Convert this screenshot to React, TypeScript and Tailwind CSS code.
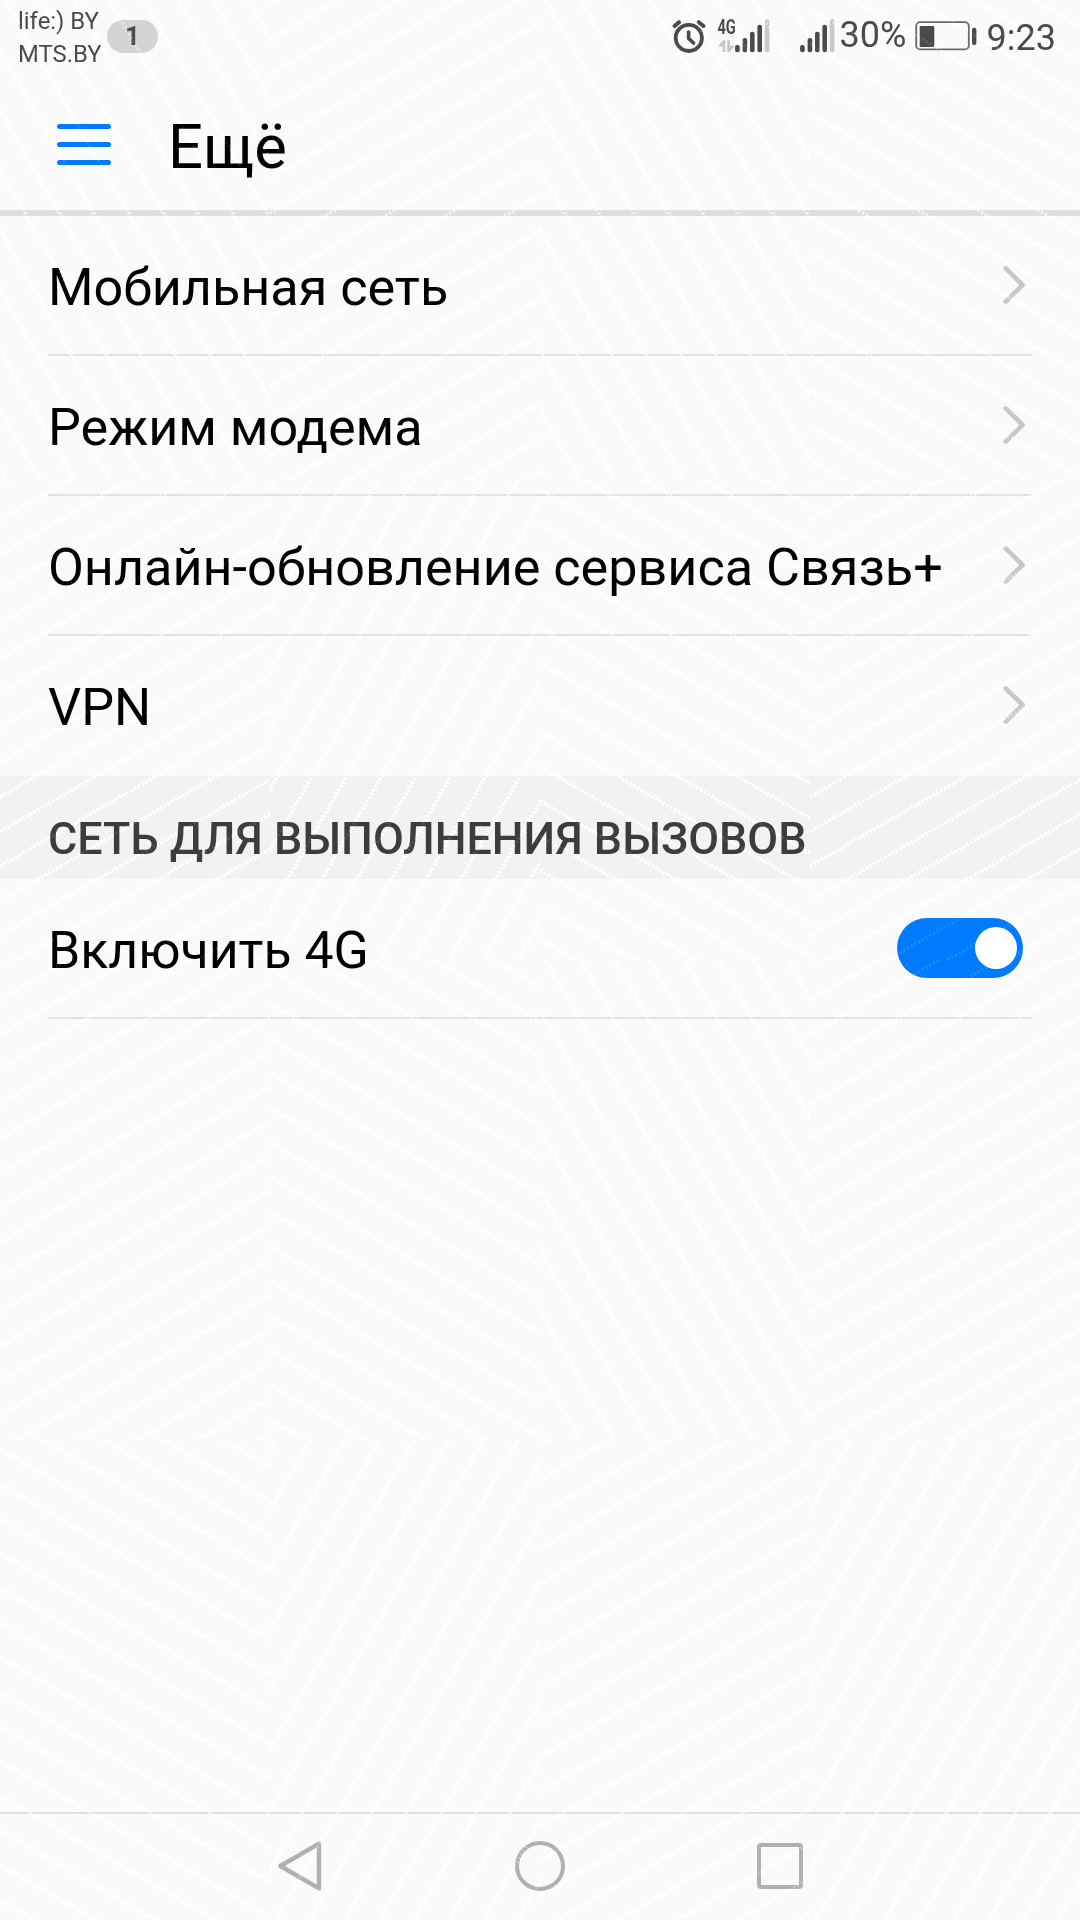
import React from 'react';

type Direction = 'shallowDown' | 'shallowUp' | 'steepDown' | 'steepUp';

const TILE_W = 270;
const TILE_H = 480;
const STEP = 34.641;
const TAN30 = 0.57735;

// Direction of the dotted hatching in every wallpaper tile, row by row
const TILES: Direction[][] = [
  ['steepDown', 'shallowUp', 'steepDown', 'shallowDown'],
  ['shallowUp', 'steepUp', 'shallowDown', 'shallowUp'],
  ['shallowUp', 'shallowDown', 'steepDown', 'shallowUp'],
  ['shallowDown', 'steepUp', 'shallowUp', 'steepUp'],
];

const getTilePath = (direction: Direction): string => {
  const parts: string[] = [];
  for (let i = -10; i < 26; i++) {
    if (direction === 'shallowDown') {
      const y = 9.3 + i * STEP;
      parts.push(`M0 ${y}L${TILE_W} ${y + TILE_W * TAN30}`);
    } else if (direction === 'shallowUp') {
      const y = 5.2 + i * STEP;
      parts.push(`M0 ${y}L${TILE_W} ${y - TILE_W * TAN30}`);
    } else if (direction === 'steepDown') {
      const x = 5.5 + i * STEP;
      parts.push(`M${x} 0L${x + TILE_H * TAN30} ${TILE_H}`);
    } else {
      const x = 5.5 + i * STEP;
      parts.push(`M${x} 0L${x - TILE_H * TAN30} ${TILE_H}`);
    }
  }
  return parts.join('');
};

const Texture: React.FC = () => (
  <svg
    className="absolute inset-0 pointer-events-none mix-blend-plus-lighter"
    width="1080"
    height="1920"
    aria-hidden="true"
  >
    {TILES.map((row, r) =>
      row.map((direction, c) => (
        <svg key={`${r}-${c}`} x={c * TILE_W} y={r * TILE_H} width={TILE_W} height={TILE_H} overflow="hidden">
          <path d={getTilePath(direction)} fill="none" stroke="#141414" strokeWidth="3.5" strokeDasharray="2.3 2" />
        </svg>
      ))
    )}
  </svg>
);

const AlarmIcon: React.FC = () => (
  <svg width="34" height="36" viewBox="0 0 34 36" fill="none" stroke="#4a4a4a" strokeLinecap="round">
    <circle cx="16.8" cy="19.9" r="13.1" strokeWidth="3.8" />
    <path d="M16.6 14v6.4l5 4.6" strokeWidth="3.6" strokeLinejoin="round" />
    <path d="M2.6 8L7 4.2M26.8 4.2l4.6 3.8" strokeWidth="4" />
  </svg>
);

const BARS = [
  { x: 2.3, top: 45 },
  { x: 9.8, top: 38 },
  { x: 17.2, top: 31.7 },
  { x: 24.6, top: 24.7 },
  { x: 32, top: 19 },
];

const SignalBars: React.FC = () => (
  <svg width="35" height="72" viewBox="0 0 35 72">
    {BARS.map((bar, i) => (
      <rect
        key={bar.x}
        x={bar.x - 2.2}
        y={bar.top}
        width="4.6"
        height={52.3 - bar.top}
        rx="2.1"
        fill={i === 4 ? '#c8c8c8' : '#4a4a4a'}
      />
    ))}
  </svg>
);

const BatteryIcon: React.FC = () => (
  <svg width="62" height="32" viewBox="0 0 62 32">
    <rect x="1.2" y="2.2" width="52.6" height="27.2" rx="4" fill="none" stroke="#6a6a6a" strokeWidth="1.8" />
    <rect x="4.7" y="6" width="14.6" height="21" rx="1" fill="#4a4a4a" />
    <rect x="57" y="7.7" width="4.4" height="17.4" rx="2" fill="#4a4a4a" />
  </svg>
);

const ChevronIcon: React.FC = () => (
  <svg width="26" height="42" viewBox="0 0 26 42" fill="none">
    <path
      d="M4.7 4.4L21.6 21L4.7 37.6"
      stroke="#c8c8c8"
      strokeWidth="4.6"
      strokeLinecap="round"
      strokeLinejoin="round"
    />
  </svg>
);

const StatusIcons: React.FC = () => (
  <div className="flex items-start ml-[514px] whitespace-nowrap">
    <div className="mt-[18px]"><AlarmIcon /></div>
    <svg className="ml-[11px] overflow-visible" width="21" height="72" viewBox="0 0 21 72">
      <text
        x="0.4"
        y="34"
        textLength="18.4"
        lengthAdjust="spacingAndGlyphs"
        className="font-bold text-[21px] fill-[#4a4a4a]"
      >
        4G
      </text>
      <path d="M1 46.5L6 40.3h2.3V52H5.6v-5.5zM10.2 40.3h2.7v5.4H18L12.6 52h-2.4z" fill="#c8c8c8" />
    </svg>
    <div className="-ml-[3px]"><SignalBars /></div>
    <div className="ml-[29.5px]"><SignalBars /></div>
    <div className="w-[68px] ml-[5px] mt-3.5 text-4xl/[42px]">30%</div>
    <div className="ml-[7px] mt-5"><BatteryIcon /></div>
    <div className="ml-2.5 mt-[17px] text-4xl/[42px]">9:23</div>
  </div>
);

const StatusBar: React.FC = () => (
  <div className="h-[72px] flex items-start text-[#4a4a4a]">
    <div className="w-[89px] ml-[17px] pl-px mt-[5px] text-[23.9px]/[33px] whitespace-nowrap">
      <div>life:) BY</div>
      <div>MTS.BY</div>
    </div>
    <div className="w-[51px] h-[33px] ml-px mt-5 rounded-full bg-[#d4d4d4] text-[26px]/[33px] font-bold text-center">
      1
    </div>
    <StatusIcons />
  </div>
);

const MENU_ITEMS = ['Мобильная сеть', 'Режим модема', 'Онлайн-обновление сервиса Связь+', 'VPN'];

export default function App() {
  return (
    <div className="relative isolate w-[1080px] h-[1920px] overflow-hidden flex flex-col bg-[#fafafa] text-black font-['Roboto',sans-serif]">
      <StatusBar />

      <header className="h-36 flex items-start border-b-[6px] border-[#dfdfdf]">
        <div className="w-[54px] ml-[57px] mt-[51.5px] flex flex-col gap-[13px]">
          <span className="h-[5px] rounded-full bg-[#007aff]" />
          <span className="h-[5px] rounded-full bg-[#007aff]" />
          <span className="h-[5px] rounded-full bg-[#007aff]" />
        </div>
        <h1 className="ml-[57px] mt-[39px] text-[61.5px]/[72px]">Ещё</h1>
      </header>

      <ul>
        {MENU_ITEMS.map((item, i) => (
          <li
            key={item}
            className={`h-[140px] mx-12 flex items-start justify-between whitespace-nowrap ${
              i < MENU_ITEMS.length - 1 ? 'border-b-2 border-[#e2e2e2]' : ''
            }`}
          >
            <span className="mt-[41px] text-[52.15px]/[61px]">{item}</span>
            <span className="mt-12 mr-[5px]"><ChevronIcon /></span>
          </li>
        ))}
      </ul>

      <h2 className="h-[103px] pl-12 pt-[37px] bg-[#f2f2f2] text-[#3c3c3c] text-[44.8px]/[52px] font-medium whitespace-nowrap">
        СЕТЬ ДЛЯ ВЫПОЛНЕНИЯ ВЫЗОВОВ
      </h2>

      <div className="h-[140px] mx-12 flex items-start justify-between border-b-2 border-[#e2e2e2]">
        <span className="mt-[41px] text-[51.8px]/[61px]">Включить 4G</span>
        <button className="w-[126px] h-[60px] mt-[39px] mr-[9px] pr-1.5 rounded-full bg-[#007aff] flex items-center justify-end">
          <span className="size-[42px] rounded-full bg-white" />
        </button>
      </div>

      <nav className="h-[108px] mt-auto flex items-start border-t-2 border-[#e0e0e0]">
        <svg className="ml-[277px] mt-[26px]" width="46" height="52" viewBox="0 0 46 52" fill="none">
          <path d="M42 3.6v44.8L3.4 26z" stroke="#b0b0b0" strokeWidth="4.4" strokeLinejoin="round" />
        </svg>
        <div className="ml-48 mt-[27px] size-[50px] rounded-full border-[4.4px] border-[#b0b0b0]" />
        <div className="ml-48 mt-[29px] size-[46px] rounded-[4px] border-4 border-[#b0b0b0]" />
      </nav>

      <Texture />
    </div>
  );
}
